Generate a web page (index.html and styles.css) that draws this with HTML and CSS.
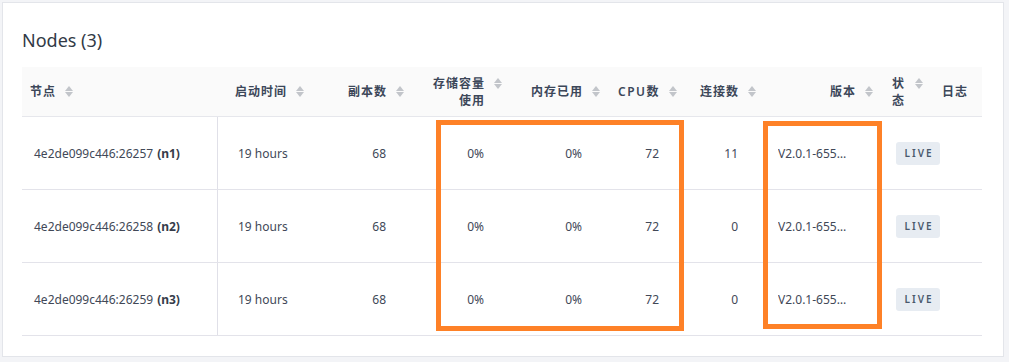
FILE: index.html
```html
<!DOCTYPE html>
<html lang="zh">
<head>
<meta charset="utf-8">
<title>Nodes</title>
<link rel="stylesheet" href="styles.css">
</head>
<body>
<section class="card">
  <h2 class="card-title">Nodes (3)</h2>
  <div class="table">
    <div class="row head">
      <div class="th th-c1"><div class="th-inner"><span class="th-label">节点</span><svg class="sort" width="8" height="11" viewBox="0 0 8 11"><path d="M4 0L8 5H0Z"/><path d="M0 6H8L4 11Z"/></svg></div></div>
      <div class="th th-c2"><div class="th-inner"><span class="th-label">启动时间</span><svg class="sort" width="8" height="11" viewBox="0 0 8 11"><path d="M4 0L8 5H0Z"/><path d="M0 6H8L4 11Z"/></svg></div></div>
      <div class="th th-right"><div class="th-inner"><span class="th-label">副本数</span><svg class="sort" width="8" height="11" viewBox="0 0 8 11"><path d="M4 0L8 5H0Z"/><path d="M0 6H8L4 11Z"/></svg></div></div>
      <div class="th th-right"><div class="th-inner"><span class="th-label th-wrap4">存储容量使用</span><svg class="sort" width="8" height="11" viewBox="0 0 8 11"><path d="M4 0L8 5H0Z"/><path d="M0 6H8L4 11Z"/></svg></div></div>
      <div class="th th-right"><div class="th-inner"><span class="th-label">内存已用</span><svg class="sort" width="8" height="11" viewBox="0 0 8 11"><path d="M4 0L8 5H0Z"/><path d="M0 6H8L4 11Z"/></svg></div></div>
      <div class="th th-right"><div class="th-inner"><span class="th-label th-cpu">CPU数</span><svg class="sort" width="8" height="11" viewBox="0 0 8 11"><path d="M4 0L8 5H0Z"/><path d="M0 6H8L4 11Z"/></svg></div></div>
      <div class="th th-right"><div class="th-inner"><span class="th-label">连接数</span><svg class="sort" width="8" height="11" viewBox="0 0 8 11"><path d="M4 0L8 5H0Z"/><path d="M0 6H8L4 11Z"/></svg></div></div>
      <div class="th th-right"><div class="th-inner"><span class="th-label">版本</span><svg class="sort" width="8" height="11" viewBox="0 0 8 11"><path d="M4 0L8 5H0Z"/><path d="M0 6H8L4 11Z"/></svg></div></div>
      <div class="th th-c9"><div class="th-inner"><span class="th-label th-wrap1">状态</span><svg class="sort" width="8" height="11" viewBox="0 0 8 11"><path d="M4 0L8 5H0Z"/><path d="M0 6H8L4 11Z"/></svg></div></div>
      <div class="th th-c10"><div class="th-inner"><span class="th-label">日志</span></div></div>
    </div>

    <div class="row">
      <div class="td td-c1">4e2de099c446:26257 <b>(n1)</b></div>
      <div class="td td-c2">19 hours</div>
      <div class="td td-right">68</div>
      <div class="td td-right">0%</div>
      <div class="td td-right">0%</div>
      <div class="td td-right">72</div>
      <div class="td td-right">11</div>
      <div class="td td-ver"><span class="ver">V2.0.1-655…</span></div>
      <div class="td td-c9"><span class="badge">LIVE</span></div>
      <div class="td"></div>
    </div>

    <div class="row">
      <div class="td td-c1">4e2de099c446:26258 <b>(n2)</b></div>
      <div class="td td-c2">19 hours</div>
      <div class="td td-right">68</div>
      <div class="td td-right">0%</div>
      <div class="td td-right">0%</div>
      <div class="td td-right">72</div>
      <div class="td td-right">0</div>
      <div class="td td-ver"><span class="ver">V2.0.1-655…</span></div>
      <div class="td td-c9"><span class="badge">LIVE</span></div>
      <div class="td"></div>
    </div>

    <div class="row">
      <div class="td td-c1">4e2de099c446:26259 <b>(n3)</b></div>
      <div class="td td-c2">19 hours</div>
      <div class="td td-right">68</div>
      <div class="td td-right">0%</div>
      <div class="td td-right">0%</div>
      <div class="td td-right">72</div>
      <div class="td td-right">0</div>
      <div class="td td-ver"><span class="ver">V2.0.1-655…</span></div>
      <div class="td td-c9"><span class="badge">LIVE</span></div>
      <div class="td"></div>
    </div>
  </div>
</section>

<div class="highlight highlight-usage"></div>
<div class="highlight highlight-version"></div>
</body>
</html>
```

FILE: styles.css
```css
html, body {
  margin: 0;
  padding: 0;
}

body {
  background: #f3f4f7;
  padding: 2px 7px 0 2px;
  font-family: "Noto Sans", "Noto Sans CJK SC", sans-serif;
  color: #3a4150;
}

.card {
  background: #ffffff;
  border: 1px solid #e3e5ea;
  padding: 25px 19px 20px 19px;
  width: 962px;
}

.card-title {
  margin: 0 0 15px 0;
  font-size: 18px;
  line-height: 24px;
  font-weight: 400;
  color: #323a46;
}

.table {
  width: 960px;
}

.row {
  display: grid;
  grid-template-columns: 196px 104px 94px 98px 98px 77px 79px 117px 50px 47px;
  height: 72px;
  border-bottom: 1px solid #e3e3ea;
}

.row.head {
  height: 49px;
  background: #fafafa;
  border-bottom: 1px solid #e6e7ec;
}

.th {
  display: flex;
  align-items: center;
  font-size: 12px;
  font-weight: 600;
  letter-spacing: 1px;
  color: #3c4759;
}

.th-inner {
  display: flex;
  align-items: flex-start;
  gap: 9px;
}

.th-label {
  line-height: 17px;
}

.th-wrap4 {
  max-width: 54px;
  text-align: right;
}

.th-wrap1 {
  max-width: 14px;
}

.th-cpu {
  letter-spacing: 1.5px;
}

.sort {
  flex: none;
  margin-top: 3px;
  fill: #c2c5ca;
}

.th-c1 { padding-left: 8px; }
.th-c2 { padding-left: 17px; }
.th-right {
  justify-content: flex-end;
  padding-right: 12px;
}
.th-c9 { padding-left: 7px; }
.th-c10 { padding-left: 7px; }

.td {
  display: flex;
  align-items: center;
  font-size: 12px;
  white-space: nowrap;
  color: #414857;
}

.td b {
  font-weight: 700;
  margin-left: 4px;
  color: #353c4a;
}

.td-c1 {
  padding-left: 12px;
  border-right: 1px solid #e0e0e8;
}

.td-c2 { padding-left: 20px; }

.td-right {
  justify-content: flex-end;
  padding-right: 30px;
}

.td-ver { padding-left: 10px; }

.ver {
  display: inline-block;
  max-width: 76px;
  overflow: hidden;
  text-overflow: ellipsis;
}

.td-c9 {
  padding-left: 11px;
  overflow: visible;
}

.badge {
  flex: none;
  display: inline-flex;
  align-items: center;
  justify-content: center;
  width: 44px;
  height: 23px;
  padding-left: 2px;
  box-sizing: border-box;
  background: #e7ecf2;
  border-radius: 3px;
  font-size: 10px;
  font-weight: 600;
  letter-spacing: 2px;
  color: #4a596d;
}

.highlight {
  position: absolute;
  box-sizing: border-box;
  border: 5px solid #fe8127;
}

.highlight-usage {
  left: 436px;
  top: 120px;
  width: 248px;
  height: 211px;
}

.highlight-version {
  left: 763px;
  top: 121px;
  width: 119px;
  height: 208px;
}
```
